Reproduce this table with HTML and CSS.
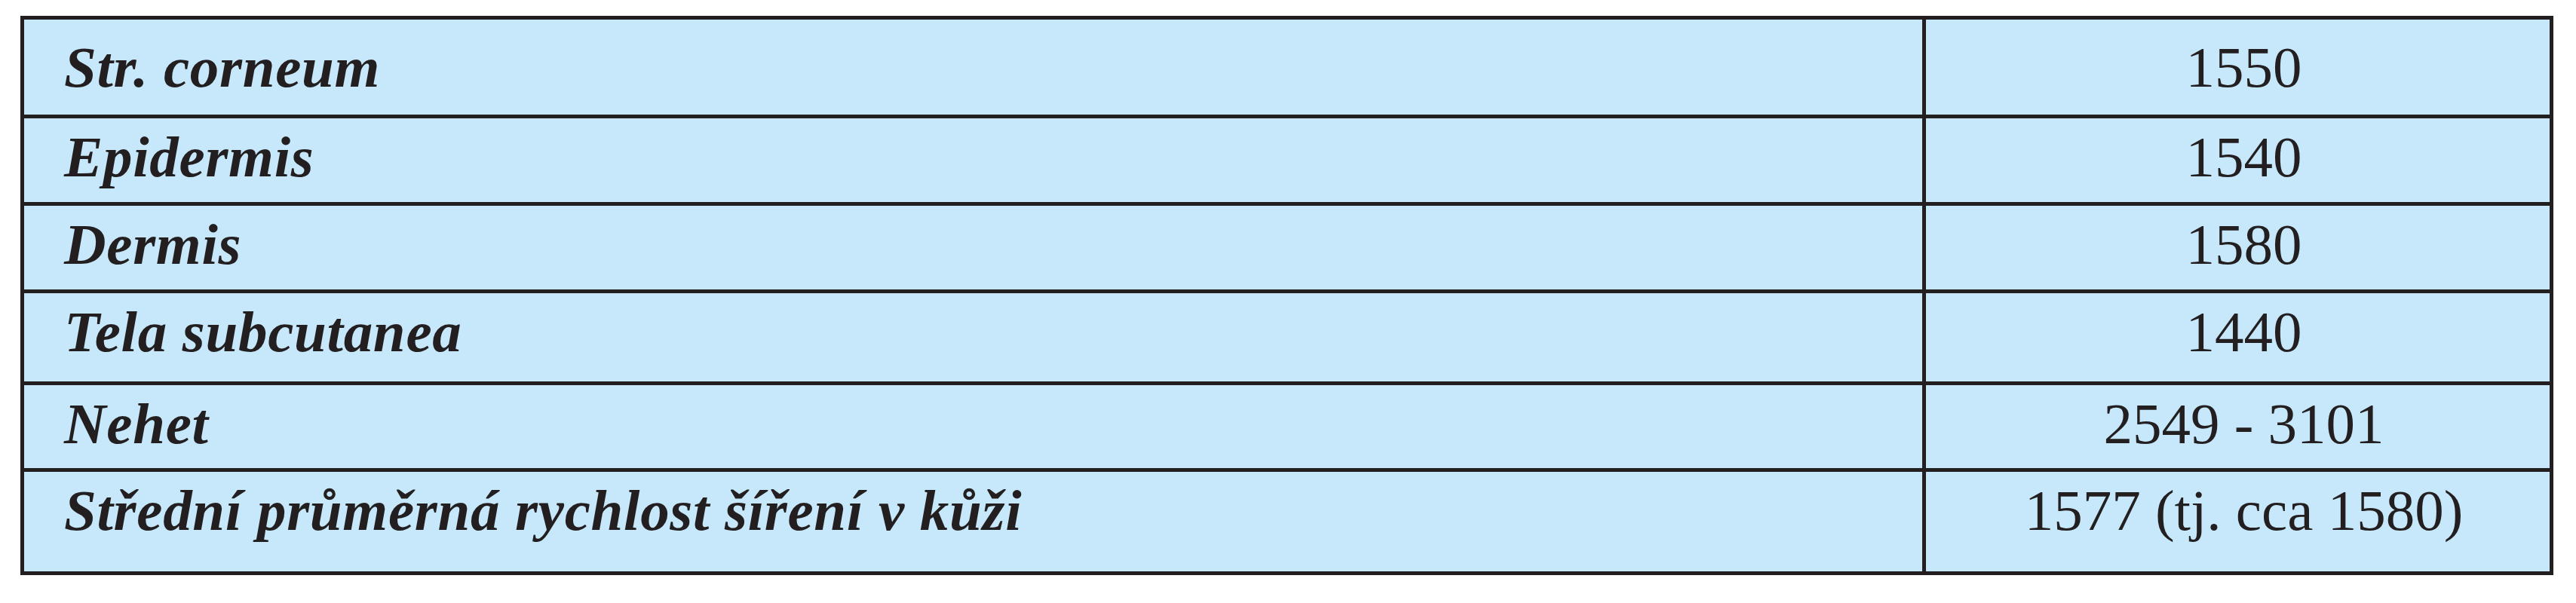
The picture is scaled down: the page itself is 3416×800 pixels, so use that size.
FILE: index.html
```html
<!DOCTYPE html>
<html lang="cs">
<head>
<meta charset="utf-8">
<title>Rychlost šíření ultrazvuku v kůži</title>
<link rel="stylesheet" href="styles.css">
</head>
<body>
<div class="sheet">
  <div class="grid">
    <div class="cell name first">Str. corneum</div>
    <div class="cell value first">1550</div>
    <div class="cell name">Epidermis</div>
    <div class="cell value">1540</div>
    <div class="cell name">Dermis</div>
    <div class="cell value">1580</div>
    <div class="cell name">Tela subcutanea</div>
    <div class="cell value">1440</div>
    <div class="cell name">Nehet</div>
    <div class="cell value">2549 - 3101</div>
    <div class="cell name">Střední průměrná rychlost šíření v kůži</div>
    <div class="cell value">1577 (tj. cca 1580)</div>
  </div>
</div>
</body>
</html>
```
FILE: styles.css
```css
html, body {
  margin: 0;
  padding: 0;
  background: #ffffff;
}

.sheet {
  padding: 21px 0 0 27px;
}

.grid {
  position: relative;
  display: grid;
  width: max-content;
  grid-template-columns: 2517px 827px;
  grid-template-rows: 126px 111px 111px 117px 110px 132px;
  gap: 5px;
  padding: 5px;
  background: #231f20;
}

/* small overrun of the column rule below the bottom frame */
.grid::after {
  content: "";
  position: absolute;
  left: 2522px;
  top: 100%;
  width: 5px;
  height: 5px;
  background: #231f20;
}

.cell {
  background: #c6e8fa;
  color: #231f20;
  font-family: "Liberation Serif", "Times New Roman", serif;
  font-size: 77px;
  line-height: 1;
  padding-top: 13px;
  white-space: nowrap;
}

.cell.first {
  padding-top: 25px;
}

.name {
  font-style: italic;
  font-weight: bold;
  padding-left: 53px;
  letter-spacing: 0.7px;
}

.value {
  text-align: center;
  padding-left: 16px;
}
```
